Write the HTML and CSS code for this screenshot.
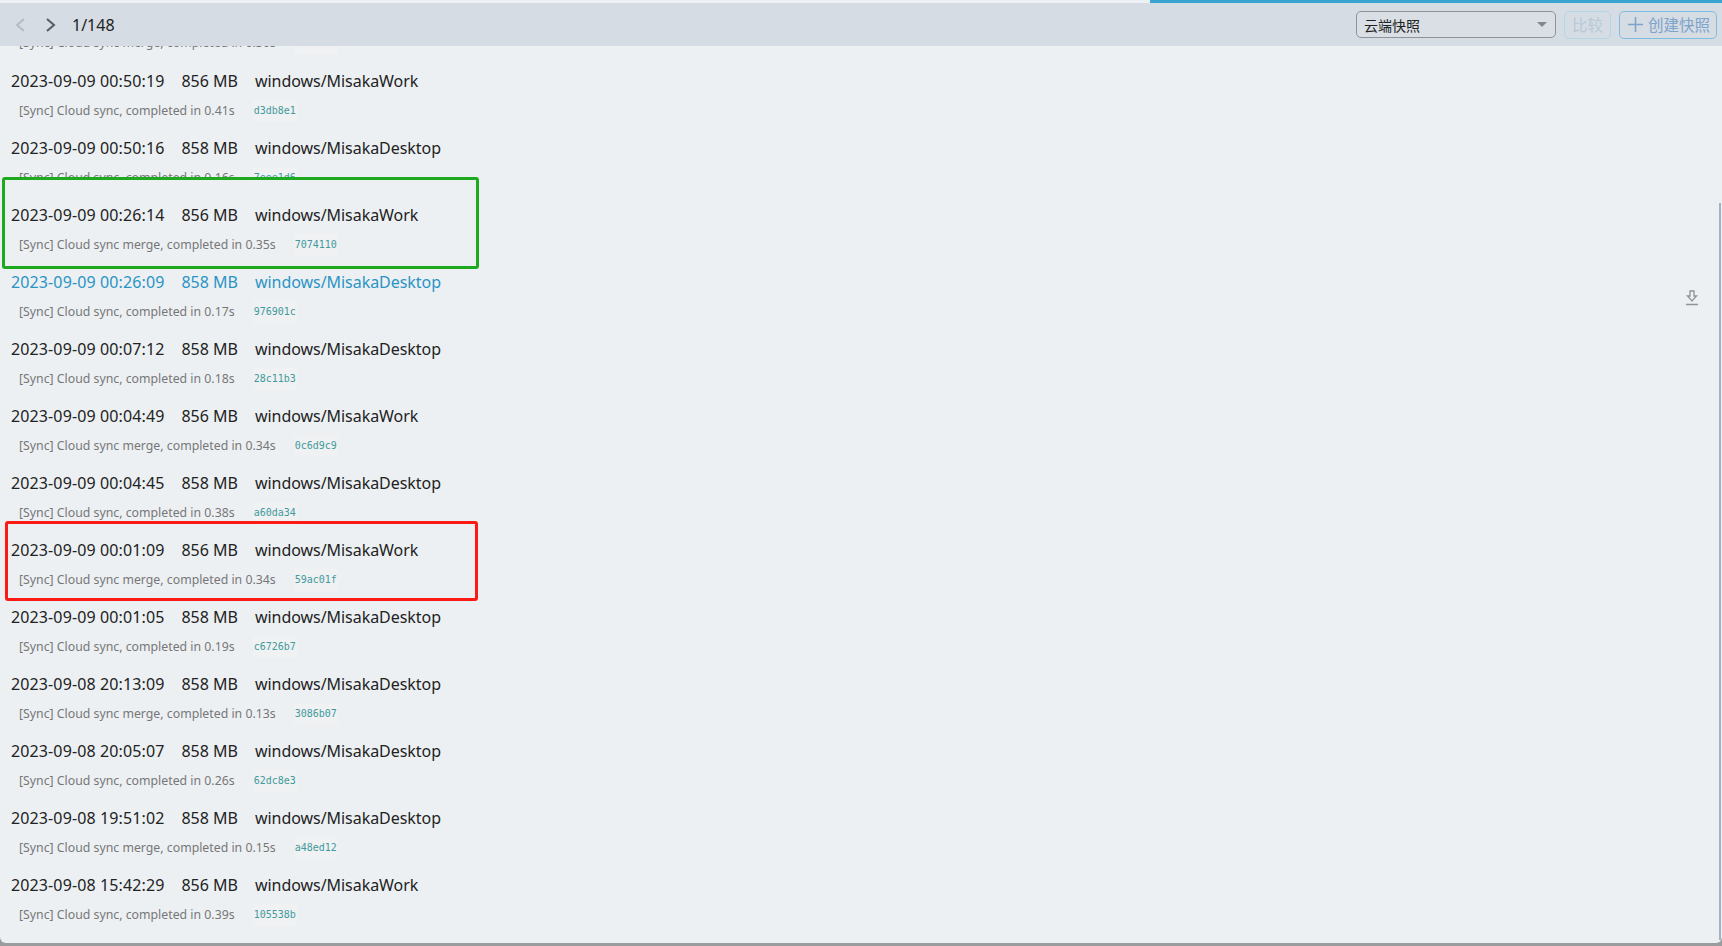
FILE: index.html
```html
<!DOCTYPE html>
<html lang="zh-CN">
<head>
  <meta charset="UTF-8">
  <meta name="viewport" content="width=device-width, initial-scale=1.0">
  <title>云端快照</title>
  <link rel="stylesheet" href="styles.css">
</head>
<body>
  <div class="progress"><div class="progress-bar"></div></div>

  <div class="toolbar">
    <button class="nav-btn nav-disabled">
      <svg width="12" height="16" viewBox="0 0 12 16"><path d="M10 2 3 8l7 6" /></svg>
    </button>
    <button class="nav-btn">
      <svg width="12" height="16" viewBox="0 0 12 16"><path d="m3 2 7 6-7 6" /></svg>
    </button>
    <span class="counter">1/148</span>
    <div class="select">云端快照<span class="caret"></span></div>
    <button class="btn btn-disabled">比较</button>
    <button class="btn btn-create">
      <svg width="15" height="15" viewBox="0 0 15 15"><path d="M7.500 0v15M0 7.500h15" /></svg>
      创建快照
    </button>
  </div>

  <div class="main">
    <div class="scrollbar"></div>
    <div class="list">
      <div class="row row-cut">
        <div class="row-body">
          <div class="sub"><span>[Sync] Cloud sync merge, completed in 0.36s</span><code>3f23bcc</code></div>
        </div>
      </div>
      <div class="row">
        <div class="row-body">
          <div class="title"><span>2023-09-09 00:50:19</span><span>856 MB</span><span>windows/MisakaWork</span></div>
          <div class="sub"><span>[Sync] Cloud sync, completed in 0.41s</span><code>d3db8e1</code></div>
        </div>
      </div>
      <div class="row">
        <div class="row-body">
          <div class="title"><span>2023-09-09 00:50:16</span><span>858 MB</span><span>windows/MisakaDesktop</span></div>
          <div class="sub"><span>[Sync] Cloud sync, completed in 0.16s</span><code>7eee1d6</code></div>
        </div>
      </div>
      <div class="row row-green">
        <div class="row-body">
          <div class="title"><span>2023-09-09 00:26:14</span><span>856 MB</span><span>windows/MisakaWork</span></div>
          <div class="sub"><span>[Sync] Cloud sync merge, completed in 0.35s</span><code>7074110</code></div>
        </div>
      </div>
      <div class="row row-hover">
        <div class="row-body">
          <div class="title"><span>2023-09-09 00:26:09</span><span>858 MB</span><span>windows/MisakaDesktop</span></div>
          <div class="sub"><span>[Sync] Cloud sync, completed in 0.17s</span><code>976901c</code></div>
        </div>
        <svg class="download" width="14" height="16" viewBox="0 0 14 16"><path d="M5 1h4v5h2.500L7 11 2.500 6H5zM1 14.500h12" /></svg>
      </div>
      <div class="row">
        <div class="row-body">
          <div class="title"><span>2023-09-09 00:07:12</span><span>858 MB</span><span>windows/MisakaDesktop</span></div>
          <div class="sub"><span>[Sync] Cloud sync, completed in 0.18s</span><code>28c11b3</code></div>
        </div>
      </div>
      <div class="row">
        <div class="row-body">
          <div class="title"><span>2023-09-09 00:04:49</span><span>856 MB</span><span>windows/MisakaWork</span></div>
          <div class="sub"><span>[Sync] Cloud sync merge, completed in 0.34s</span><code>0c6d9c9</code></div>
        </div>
      </div>
      <div class="row">
        <div class="row-body">
          <div class="title"><span>2023-09-09 00:04:45</span><span>858 MB</span><span>windows/MisakaDesktop</span></div>
          <div class="sub"><span>[Sync] Cloud sync, completed in 0.38s</span><code>a60da34</code></div>
        </div>
      </div>
      <div class="row row-red">
        <div class="row-body">
          <div class="title"><span>2023-09-09 00:01:09</span><span>856 MB</span><span>windows/MisakaWork</span></div>
          <div class="sub"><span>[Sync] Cloud sync merge, completed in 0.34s</span><code>59ac01f</code></div>
        </div>
      </div>
      <div class="row">
        <div class="row-body">
          <div class="title"><span>2023-09-09 00:01:05</span><span>858 MB</span><span>windows/MisakaDesktop</span></div>
          <div class="sub"><span>[Sync] Cloud sync, completed in 0.19s</span><code>c6726b7</code></div>
        </div>
      </div>
      <div class="row">
        <div class="row-body">
          <div class="title"><span>2023-09-08 20:13:09</span><span>858 MB</span><span>windows/MisakaDesktop</span></div>
          <div class="sub"><span>[Sync] Cloud sync merge, completed in 0.13s</span><code>3086b07</code></div>
        </div>
      </div>
      <div class="row">
        <div class="row-body">
          <div class="title"><span>2023-09-08 20:05:07</span><span>858 MB</span><span>windows/MisakaDesktop</span></div>
          <div class="sub"><span>[Sync] Cloud sync, completed in 0.26s</span><code>62dc8e3</code></div>
        </div>
      </div>
      <div class="row">
        <div class="row-body">
          <div class="title"><span>2023-09-08 19:51:02</span><span>858 MB</span><span>windows/MisakaDesktop</span></div>
          <div class="sub"><span>[Sync] Cloud sync merge, completed in 0.15s</span><code>a48ed12</code></div>
        </div>
      </div>
      <div class="row">
        <div class="row-body">
          <div class="title"><span>2023-09-08 15:42:29</span><span>856 MB</span><span>windows/MisakaWork</span></div>
          <div class="sub"><span>[Sync] Cloud sync, completed in 0.39s</span><code>105538b</code></div>
        </div>
      </div>
    </div>
  </div>
</body>
</html>
```

FILE: styles.css
```css
html, body {
  height: 100%;
}
body {
  margin: 0;
  height: 946px;
  overflow: hidden;
  display: flex;
  flex-direction: column;
  background-color: #9a9c9e;
  color: #222;
  font-family: "Noto Sans", "Noto Sans CJK SC", sans-serif;
}

.progress {
  height: 3px;
  flex: none;
  background-color: #eef1f4;
}
.progress-bar {
  height: 3px;
  margin-left: 1150px;
  background-color: #3ba3d0;
}

.toolbar {
  position: relative;
  z-index: 2;
  flex: none;
  height: 43px;
  display: flex;
  align-items: center;
  padding-right: 5px;
  background-color: #d5dce3;
}
.nav-btn {
  width: 30px;
  height: 30px;
  margin: 0;
  padding: 0;
  border: 0;
  background: none;
  display: flex;
  align-items: center;
  justify-content: center;
}
.nav-btn:first-child {
  margin-left: 5px;
}
.nav-btn svg path {
  fill: none;
  stroke: #555c63;
  stroke-width: 2;
}
.nav-disabled svg path {
  stroke: #b4bcc4;
}
.counter {
  margin-left: 7px;
  font-size: 16px;
}
.select {
  margin-left: auto;
  width: 200px;
  height: 27px;
  box-sizing: border-box;
  display: flex;
  align-items: center;
  justify-content: space-between;
  padding: 0 8px 0 7px;
  border: 1px solid #8f9299;
  border-radius: 5px;
  background-color: #d9dfe5;
  color: #222;
  font-size: 14px;
}
.caret {
  width: 0;
  height: 0;
  border-left: 5px solid transparent;
  border-right: 5px solid transparent;
  border-top: 5px solid #81878e;
}
.btn {
  height: 28px;
  box-sizing: border-box;
  display: flex;
  align-items: center;
  margin: 0 0 0 8px;
  padding: 0;
  background: none;
  border-radius: 5px;
  font-family: inherit;
  font-size: 15.5px;
}
.btn-disabled {
  width: 47px;
  justify-content: center;
  border: 1px solid #b5d6e6;
  color: #b7c9d9;
}
.btn-create {
  width: 98px;
  gap: 5px;
  padding-left: 8px;
  border: 1px solid #7fbee0;
  color: #7ea3cb;
}
.btn-create svg path {
  fill: none;
  stroke: #7ea3cb;
  stroke-width: 1.5;
}

.main {
  position: relative;
  flex: none;
  height: 897px;
  overflow: hidden;
  border-radius: 0 0 6px 6px;
  background-color: #ecf0f3;
}
.scrollbar {
  position: absolute;
  top: 157px;
  right: 1px;
  bottom: 3px;
  width: 2px;
  background-color: #a2b3c4;
}
.list {
  margin-top: -14px;
}
.row {
  box-sizing: border-box;
  height: 67px;
  padding: 7px 23px 0 11px;
  display: flex;
  align-items: center;
  justify-content: space-between;
}
.row-cut {
  height: 26px;
  padding-top: 0;
  align-items: flex-start;
}
.row-cut .sub {
  margin-top: 0;
}
.row-body {
  flex: 1;
}
.title {
  display: flex;
  gap: 17px;
  font-size: 16px;
  line-height: 24px;
}
.title span:first-child {
  letter-spacing: 0.12px;
}
.title span:last-child {
  letter-spacing: -0.05px;
}
.sub {
  display: flex;
  align-items: center;
  gap: 18px;
  margin-top: 7px;
  padding-left: 8px;
  color: #777;
  font-size: 12.3px;
  line-height: 22px;
}
.sub code {
  padding: 0 1px;
  background-color: #eff1f3;
  color: #3f9a9c;
  font-family: "DejaVu Sans Mono", monospace;
  font-size: 10px;
}
.row-hover .title {
  color: #2a94c4;
}
.download {
  flex: none;
  margin-top: 3px;
}
.download path {
  fill: none;
  stroke: #8d9399;
  stroke-width: 1.3;
}

.row-green, .row-red {
  position: relative;
  z-index: 0;
}
.row-green::before, .row-red::before {
  content: "";
  position: absolute;
  z-index: -1;
  box-sizing: border-box;
  background-color: #ecf0f3;
  border-radius: 3px;
}
.row-green::before {
  top: -15px;
  bottom: -10px;
  left: 2px;
  width: 477px;
  border: 3px solid #1eaa1e;
}
.row-red::before {
  top: -6px;
  bottom: -7px;
  left: 5px;
  width: 473px;
  border: 3px solid #fb1a14;
}
```
